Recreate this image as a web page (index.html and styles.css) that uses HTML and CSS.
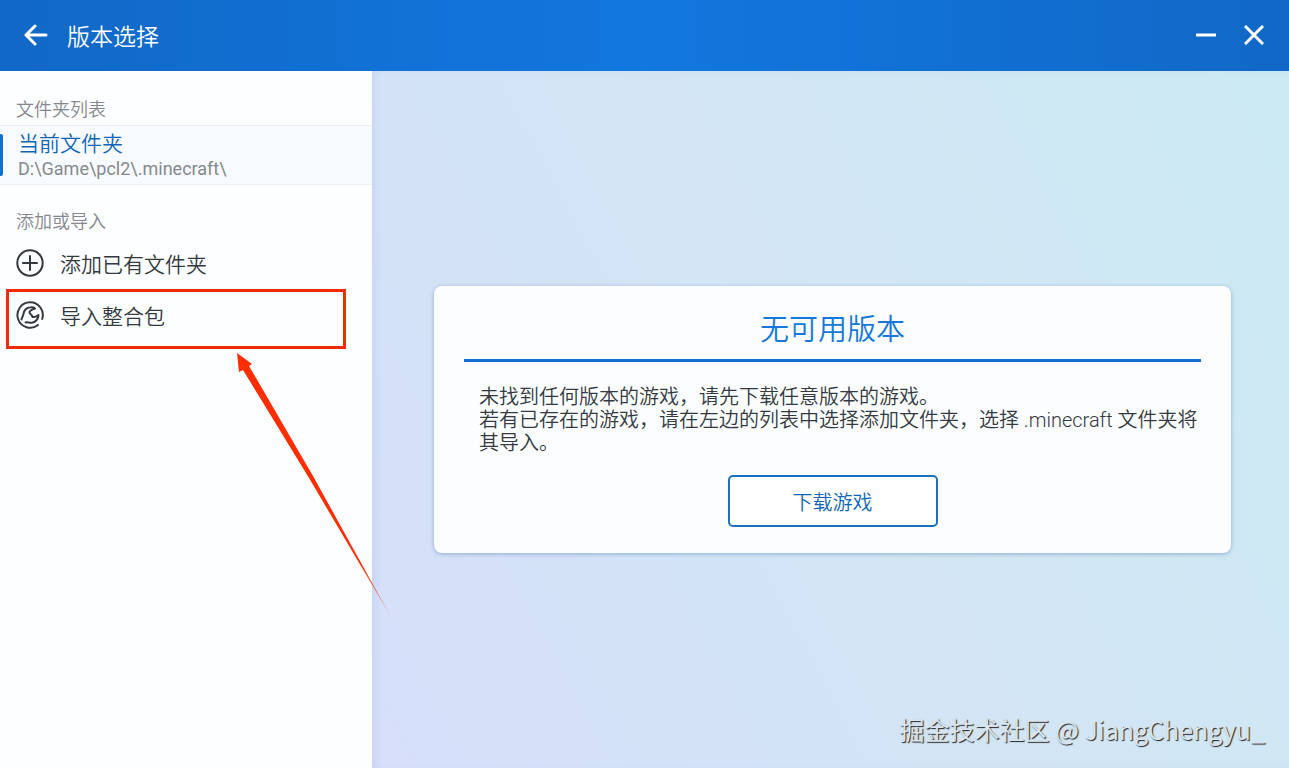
FILE: index.html
```
<!DOCTYPE html>
<html lang="zh-CN">
<head>
  <meta charset="UTF-8" />
  <meta name="viewport" content="width=device-width, initial-scale=1.0"/>
  <title>版本选择</title>
  <link rel="stylesheet" href="styles.css">
</head>
<body>

  <header class="titlebar">
    <button class="icon-btn" aria-label="返回">
      <svg width="26" height="22" viewBox="0 0 26 22"><path d="M12 2 L3 11 L12 20 M3 11 H23"/></svg>
    </button>
    <h1>版本选择</h1>
    <div class="window-buttons">
      <button class="icon-btn" aria-label="最小化">
        <svg width="20" height="20" viewBox="0 0 20 20"><path class="flat" d="M0 10 H20"/></svg>
      </button>
      <button class="icon-btn" aria-label="关闭">
        <svg width="20" height="20" viewBox="0 0 20 20"><path class="flat" d="M1 1 L19 19 M19 1 L1 19"/></svg>
      </button>
    </div>
  </header>

  <div class="content">
    <aside class="sidebar">
      <h2>文件夹列表</h2>
      <a class="folder" href="#">
        <span class="folder-name">当前文件夹</span>
        <span class="folder-path">D:\Game\pcl2\.minecraft\</span>
      </a>

      <h2>添加或导入</h2>
      <button class="action">
        <svg width="28" height="28" viewBox="0 0 28 28"><circle cx="14" cy="14" r="12.7"/><path d="M14 7 V21 M7 14 H21"/></svg>
        添加已有文件夹
      </button>
      <button class="action marked">
        <svg width="28" height="28" viewBox="0 0 28 28">
          <path d="M22 24 A12.7 12.7 0 1 1 26.2 18"/>
          <path d="M5.500 18.500 C5.500 16.500 7 16 7.300 13.500 C8 9 11 6.500 14.500 6.300 C17 6 18.500 6.500 19 7.500 C16 8.500 13.500 9.500 13.500 11.500 C13.500 13.300 16 13.300 16.500 16 C18.500 16.500 20.500 15.500 22.500 14 C22.500 18 19.500 21.500 15.500 21.800 C13 22 12 20.800 9.500 21.500"/>
        </svg>
        导入整合包
        <!-- pointer to the import entry -->
        <svg class="arrow" width="154" height="264" viewBox="0 0 154 264">
          <defs>
            <linearGradient id="tail" x1="0" y1="0" x2="0" y2="1">
              <stop offset="0.8" stop-color="#ff2d00"/>
              <stop offset="1" stop-color="#ff2d00" stop-opacity="0.3"/>
            </linearGradient>
          </defs>
          <path d="M0 0 L15 11 L12 13 L76 123 L154 264 L72 125 L6 17 L2 19 Z"/>
        </svg>
      </button>
    </aside>

    <main class="panel">
      <section class="card">
        <h2>无可用版本</h2>
        <p>未找到任何版本的游戏，请先下载任意版本的游戏。<br>若有已存在的游戏，请在左边的列表中选择添加文件夹，选择 .minecraft 文件夹将其导入。</p>
        <button class="download">下载游戏</button>
      </section>
      <div class="watermark">掘金技术社区 @ JiangChengyu_</div>
    </main>
  </div>

</body>
</html>
```
FILE: styles.css
```
:root {
  --primary: #1370d0;
  --primary-dark: #0f66b8;
  --text-color: #343a40;
  --muted: #85898e;
  --mark: #f02b08;
}

* {
  margin: 0;
  padding: 0;
  box-sizing: border-box;
}

body {
  min-height: 100vh;
  display: flex;
  flex-direction: column;
  font-family: Roboto, 'Noto Sans CJK SC', sans-serif;
  font-weight: 350;
  color: var(--text-color);
}

button {
  background: none;
  border: none;
  font: inherit;
  color: inherit;
  cursor: pointer;
}

svg {
  display: block;
  fill: none;
  stroke: currentColor;
  stroke-width: 2;
  stroke-linecap: round;
  stroke-linejoin: round;
}

/* title bar */
.titlebar {
  height: 71px;
  padding: 0 25px 2px 23px;
  display: flex;
  align-items: center;
  gap: 18px;
  color: #fff;
  background: linear-gradient(90deg, #1168c6, #1277df 50%, #1168c6);
}

.titlebar h1 {
  font-size: 23px;
  font-weight: 350;
}

.titlebar svg {
  stroke-width: 3;
}

.titlebar .flat {
  stroke-linecap: butt;
}

.window-buttons {
  margin-left: auto;
  display: flex;
  gap: 28px;
}

.content {
  flex: 1;
  display: flex;
}

/* left side */
.sidebar {
  width: 372px;
  flex-shrink: 0;
  padding-top: 24px;
  background-color: #fdfeff;
}

.sidebar h2 {
  padding-left: 16px;
  font-size: 18px;
  line-height: 30px;
  font-weight: 350;
  color: var(--muted);
}

.folder {
  position: relative;
  display: flex;
  flex-direction: column;
  height: 60px;
  margin-bottom: 22px;
  padding: 5px 18px;
  text-decoration: none;
  background-color: #f7fbff;
  border-top: 1px solid #e8edf2;
  border-bottom: 1px solid #eef2f6;
}

.folder::before {
  content: '';
  position: absolute;
  left: 0;
  top: 8px;
  width: 3px;
  height: 42px;
  border-radius: 0 2px 2px 0;
  background-color: var(--primary);
}

.folder-name {
  font-size: 21px;
  line-height: 26px;
  color: var(--primary-dark);
}

.folder-path {
  font-size: 18px;
  line-height: 24px;
  font-weight: 400;
  color: var(--muted);
}

.action {
  width: 100%;
  height: 52px;
  padding-left: 16px;
  display: flex;
  align-items: center;
  gap: 16px;
  font-size: 21px;
}

.marked {
  position: relative;
  z-index: 1;
  width: 340px;
  height: 60px;
  margin-left: 6px;
  padding: 0 0 8px 7px;
  border: 3px solid var(--mark);
}

.arrow {
  position: absolute;
  left: 228px;
  top: 61px;
  fill: url(#tail);
  stroke: none;
}

/* right side */
.panel {
  flex: 1;
  position: relative;
  display: flex;
  align-items: center;
  padding: 0 58px 0 62px;
  background: linear-gradient(62deg, #d7dffa, #d4e2f8 22%, #d3e5f5 50%, #cfe7f4 75%, #cbeaf3);
  box-shadow: inset 6px 0 8px -4px rgba(60, 110, 180, 0.12);
}

.card {
  width: 100%;
  padding: 23px 30px 26px;
  display: flex;
  flex-direction: column;
  align-items: center;
  border-radius: 8px;
  background-color: #fbfdff;
  box-shadow: 0 1px 4px rgba(40, 90, 150, 0.4);
}

.card h2 {
  width: 100%;
  padding-bottom: 8px;
  font-size: 29px;
  line-height: 42px;
  font-weight: 350;
  text-align: center;
  color: #1678dc;
  border-bottom: 3px solid var(--primary);
}

.card p {
  width: 100%;
  margin: 24px 0 20px;
  padding-left: 15px;
  font-size: 20px;
  line-height: 23px;
}

.download {
  width: 210px;
  height: 52px;
  font-size: 20px;
  color: var(--primary-dark);
  background-color: #fff;
  border: 2px solid #1e70bc;
  border-radius: 5px;
}

.watermark {
  position: absolute;
  right: 24px;
  bottom: 20px;
  font-family: 'Noto Sans CJK SC', sans-serif;
  font-size: 25px;
  font-weight: 400;
  line-height: 38px;
  color: #d8e4ee;
  text-shadow: 1px 1px 1px #222;
}
```
